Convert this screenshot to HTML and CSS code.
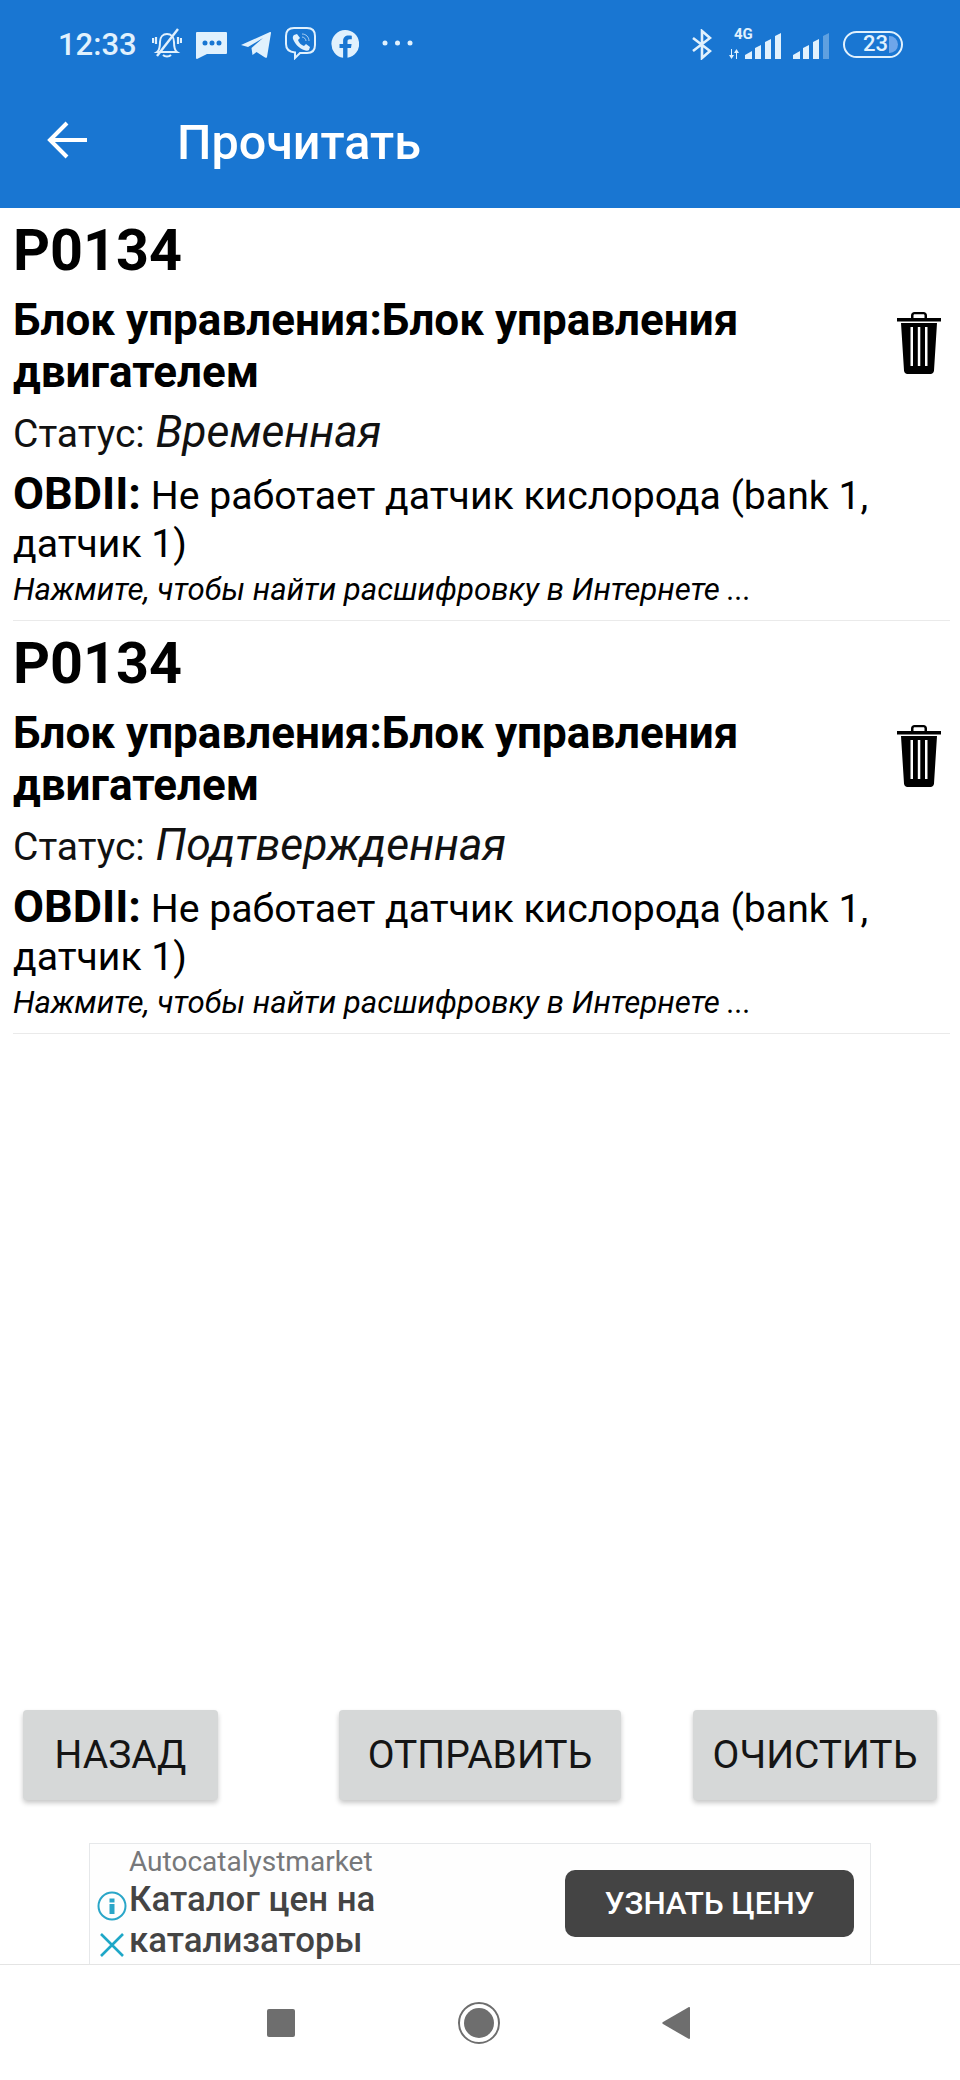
FILE: index.html
```html
<!DOCTYPE html>
<html lang="ru">
<head>
<meta charset="utf-8">
<title>Прочитать</title>
<link rel="stylesheet" href="styles.css">
</head>
<body>
<svg class="defs" width="0" height="0" aria-hidden="true">
  <symbol id="trash" viewBox="0 0 44 62">
    <path d="M14 6V3.500C14 1.500 15.500 0 17.500 0h9C28.500 0 30 1.500 30 3.500V6h-2.500V3.500C27.500 2.800 27 2.300 26.300 2.300h-8.600C17 2.300 16.500 2.800 16.500 3.500V6z"/>
    <path d="M0 6h44v3.500H0z"/>
    <path fill-rule="evenodd" d="M4 11h36l-3 47.500C36.800 60.800 35.500 62 33.500 62h-23C8.500 62 7.200 60.800 7 58.500zM13.500 15v39h2.500V15zM20.800 15v39h2.500V15zM28 15v39h2.500V15z"/>
  </symbol>
  <symbol id="bars" viewBox="0 0 36 26">
    <path d="M0 26v-4l7-4v8zM10 26V15l6-3v14zM20 26V9l6-3v20zM30 26V3l6-3v26z"/>
  </symbol>
</svg>
<header class="appbar">
  <div class="status">
    <span class="time">12:33</span>
    <div class="notif">
      <svg class="ic ic-bell" viewBox="0 0 30 30"><g fill="none" stroke="currentColor" stroke-width="2"><path d="M5 24c3-2 3-6 3-10 0-5 3-8 7-8s7 3 7 8c0 4 0 8 3 10z"/><path d="M11 27c2 2 6 2 8 0"/><path d="M5 28L26 1" stroke-width="2.400"/><path d="M4 9v7M1 10v5M26 9v7M29 10v5" stroke-width="2.200"/></g></svg>
      <svg class="ic ic-msg" viewBox="0 0 31 27"><path fill="currentColor" fill-rule="evenodd" d="M1 0h29a1 1 0 0 1 1 1v20a1 1 0 0 1-1 1H11l-10 5a1 1 0 0 1-1-1V1a1 1 0 0 1 1-1zM9 8.500a2.500 2.500 0 1 0 0 5 2.500 2.500 0 0 0 0-5zM16 8.500a2.500 2.500 0 1 0 0 5 2.500 2.500 0 0 0 0-5zM23 8.500a2.500 2.500 0 1 0 0 5 2.500 2.500 0 0 0 0-5z"/></svg>
      <svg class="ic ic-tg" viewBox="0 0 30 26"><path fill="currentColor" d="M0 13L29 0c1 0 1 .5 1 1l-4 24c-.2 1-1 1-2 .5L15.500 20l-4 3-1-7L22 6 7 15z"/></svg>
      <svg class="ic ic-viber" viewBox="0 0 31 33"><path fill="none" stroke="currentColor" stroke-width="2" d="M9 1h13c5 0 8 3 8 8v9c0 5-3 8-8 8h-7l-5 5v-5.500C4 25 1 22 1 17V9c0-5 3-8 8-8z"/><path fill="currentColor" d="M9 8l3-1 3 4-2 2c1 3 3 5 6 6l2-2 4 3-1 3c-1 1-3 1-5 0-5-2-9-6-11-11-.5-2 0-3 1-4z"/><path fill="none" stroke="currentColor" stroke-width="1" opacity=".7" d="M17 7c4 0 7 3 7 7M17 10c2 0 4 2 4 4"/></svg>
      <svg class="ic ic-fb" viewBox="0 0 28 28"><path fill="currentColor" d="M14 0a14 14 0 0 1 2.500 27.800V18h3.500l.6-4h-4.100v-2.500c0-1.300.6-2.200 2.300-2.200h2V5.800c-1-.2-2.100-.3-3.200-.3-3.400 0-5.500 2-5.500 5.600V14H8.500v4h3.600v9.800A14 14 0 0 1 14 0z"/></svg>
      <svg class="ic ic-dots" viewBox="0 0 31 6"><circle cx="3" cy="3" r="2.500" fill="currentColor"/><circle cx="15.500" cy="3" r="2.500" fill="currentColor"/><circle cx="28" cy="3" r="2.500" fill="currentColor"/></svg>
    </div>
    <div class="sys">
      <svg class="ic ic-bt" viewBox="0 0 20 31"><path fill="none" stroke="currentColor" stroke-width="2.600" d="M1 9l17 13-8 7V2l8 7L1 22"/></svg>
      <div class="net">
        <span class="net-label">4G</span>
        <svg class="ic ic-arrows" viewBox="0 0 10 10"><path fill="currentColor" d="M3 0v6h2L2.500 10 0 6h2V0zM7 10V4H5l2.500-4L10 4H8v6z"/></svg>
        <svg class="ic ic-bars"><use href="#bars"/></svg>
      </div>
      <svg class="ic ic-bars2" viewBox="0 0 36 26"><path fill="currentColor" d="M0 26v-4l7-4v8zM10 26V15l6-3v14zM20 26V9l6-3v20z"/><path fill="currentColor" opacity=".35" d="M30 26V3l6-3v26z"/></svg>
      <div class="battery"><span class="batt-num">23</span><span class="batt-fill"></span></div>
    </div>
  </div>
  <div class="toolbar">
    <svg class="back" viewBox="0 0 40 38"><path fill="none" stroke="currentColor" stroke-width="4" d="M40 19H3M20 2L3 19l17 17"/></svg>
    <h1 class="title">Прочитать</h1>
  </div>
</header>
<main class="list">
  <article class="item">
    <div class="code">P0134</div>
    <div class="unit-row">
      <div class="unit">Блок управления:Блок управления двигателем</div>
      <svg class="trash"><use href="#trash"/></svg>
    </div>
    <div class="state">Статус: <em class="state-val">Временная</em></div>
    <div class="desc"><b class="desc-key">OBDII:</b> Не работает датчик кислорода (bank 1, датчик 1)</div>
    <div class="hint">Нажмите, чтобы найти расшифровку в Интернете ...</div>
  </article>
  <article class="item">
    <div class="code">P0134</div>
    <div class="unit-row">
      <div class="unit">Блок управления:Блок управления двигателем</div>
      <svg class="trash"><use href="#trash"/></svg>
    </div>
    <div class="state">Статус: <em class="state-val">Подтвержденная</em></div>
    <div class="desc"><b class="desc-key">OBDII:</b> Не работает датчик кислорода (bank 1, датчик 1)</div>
    <div class="hint">Нажмите, чтобы найти расшифровку в Интернете ...</div>
  </article>
</main>
<div class="actions">
  <button class="btn btn-back">НАЗАД</button>
  <button class="btn btn-send">ОТПРАВИТЬ</button>
  <button class="btn btn-clear">ОЧИСТИТЬ</button>
</div>
<aside class="ad">
  <div class="ad-icons">
    <svg class="ad-info" viewBox="0 0 30 30"><circle cx="15" cy="15" r="13.500" fill="none" stroke="currentColor" stroke-width="2"/><path fill="currentColor" d="M12.500 7.500h5v4h-5zM12.500 13h5v10h-5z"/></svg>
    <svg class="ad-close" viewBox="0 0 24 24"><path fill="none" stroke="currentColor" stroke-width="2.600" d="M1 1l22 22M23 1L1 23"/></svg>
  </div>
  <div class="ad-text">
    <div class="ad-brand">Autocatalystmarket</div>
    <div class="ad-title">Каталог цен на катализаторы</div>
  </div>
  <div class="ad-cta">УЗНАТЬ ЦЕНУ</div>
</aside>
<nav class="navbar">
  <span class="nav-square"></span>
  <span class="nav-home"><span class="nav-home-dot"></span></span>
  <svg class="nav-back" viewBox="0 0 28 32"><path fill="currentColor" d="M28 1v30c0 1-1 1-1.500.8L1 17c-1-.6-1-1.400 0-2L26.500.2C27 0 28 0 28 1z"/></svg>
</nav>
</body>
</html>
```

FILE: styles.css
```css
* { box-sizing: border-box; }
html, body { margin: 0; padding: 0; }
body {
  width: 960px;
  height: 2080px;
  display: flex;
  flex-direction: column;
  background: #fff;
  color: #000;
  font-family: Roboto, "Noto Sans", sans-serif;
  overflow: hidden;
}
.defs { position: absolute; }

/* App bar */
.appbar { height: 208px; background: #1976d2; color: #fff; flex: none; }
.status {
  height: 88px;
  padding: 0 57px 0 58px;
  display: flex;
  align-items: center;
  color: #e1f1fd;
}
.time { font-size: 31px; font-weight: 500; width: 94px; }
.ic { display: block; flex: none; }
.notif { display: flex; align-items: center; }
.ic-bell { width: 30px; height: 30px; margin-top: -2px; }
.ic-msg { width: 31px; height: 27px; margin-left: 14px; margin-top: 3px; }
.ic-tg { width: 30px; height: 26px; margin-left: 14px; margin-top: 2px; }
.ic-viber { width: 31px; height: 33px; margin-left: 14px; margin-top: -1px; }
.ic-fb { width: 28px; height: 28px; margin-left: 15px; margin-top: -1px; }
.ic-dots { width: 31px; height: 6px; margin-left: 23px; margin-top: -2px; }
.sys { margin-left: auto; display: flex; align-items: center; }
.ic-bt { width: 20px; height: 31px; }
.net {
  width: 52px;
  height: 30px;
  margin-left: 17px;
  display: grid;
  grid-template-columns: 16px 36px;
  align-items: end;
  position: relative;
}
.net-label {
  position: absolute;
  left: 5px;
  top: -2px;
  font-size: 15px;
  line-height: 14px;
  font-weight: 700;
}
.ic-arrows { width: 10px; height: 10px; }
.ic-bars { width: 36px; height: 26px; fill: currentColor; }
.ic-bars2 { width: 36px; height: 26px; margin-left: 12px; margin-top: 4px; }
.battery {
  width: 60px;
  height: 27px;
  margin-left: 14px;
  border: 2.500px solid currentColor;
  border-radius: 14px;
  display: flex;
  align-items: center;
  justify-content: flex-end;
  padding-right: 3px;
  gap: 1px;
}
.batt-num { font-size: 22px; font-weight: 500; line-height: 22px; }
.batt-fill { width: 9px; height: 17px; background: #6ea6ea; border-radius: 0 9px 9px 0; }
.toolbar {
  height: 120px;
  padding-left: 47px;
  display: flex;
  align-items: center;
}
.back { width: 40px; height: 38px; flex: none; margin-top: -16px; }
.title {
  margin: -10px 0 0 90px;
  font-size: 48.500px;
  font-weight: 500;
  line-height: 56px;
}

/* List */
.list { flex: 1; padding: 0 10px 0 13px; }
.item { height: 413px; padding-top: 10px; border-bottom: 1px solid #eaeaea; }
.code { font-size: 57.500px; font-weight: 700; line-height: 66px; }
.unit-row { margin-top: 10px; display: flex; justify-content: space-between; align-items: flex-start; }
.unit { font-size: 44px; font-weight: 700; line-height: 52px; width: 800px; }
.trash { width: 44px; height: 62px; flex: none; margin: 18px 9px 0 0; fill: #000; }
.state { font-size: 39px; line-height: 56px; margin-top: 6px; font-weight: 400; color: #111; }
.state-val { font-size: 44.500px; font-weight: 400; font-style: italic; margin-left: 1px; }
.desc { font-size: 39.200px; line-height: 48px; margin-top: 8px; font-weight: 400; }
.desc-key { font-size: 45px; font-weight: 700; }
.hint { font-size: 31.200px; line-height: 36px; margin-top: 4px; font-style: italic; font-weight: 400; }

/* Buttons */
.actions {
  flex: none;
  padding: 0 23px;
  display: grid;
  grid-template-columns: 1fr 1fr 1fr;
  margin-bottom: 43px;
}
.btn {
  height: 90px;
  border: 0;
  border-radius: 4px;
  background: #d6d8d8;
  color: #151515;
  font-family: inherit;
  font-size: 39px;
  font-weight: 400;
  box-shadow: 0 3px 5px rgba(0, 0, 0, .22);
  padding: 0;
}
.btn-back { width: 195px; justify-self: start; }
.btn-send { width: 282px; justify-self: center; }
.btn-clear { width: 244px; justify-self: end; }

/* Ad */
.ad {
  flex: none;
  width: 782px;
  height: 121px;
  margin-left: 89px;
  border: 1px solid #e6e8ea;
  border-bottom: 0;
  display: flex;
  align-items: flex-start;
  background: #fefefe;
}
.ad-icons { width: 39px; flex: none; display: flex; flex-direction: column; align-items: center; padding: 47px 0 0 4px; }
.ad-info { width: 30px; height: 30px; color: #2aa6c8; }
.ad-close { width: 24px; height: 24px; margin-top: 12px; color: #1ea7c7; }
.ad-text { width: 436px; }
.ad-brand { font-size: 28px; line-height: 34px; margin-top: 1px; color: #77787a; }
.ad-title { font-size: 34.800px; font-weight: 500; line-height: 41px; color: #444; }
.ad-cta {
  width: 289px;
  height: 67px;
  margin-top: 26px;
  background: #444;
  border-radius: 10px;
  color: #fff;
  font-size: 31.300px;
  font-weight: 500;
  display: flex;
  align-items: center;
  justify-content: center;
}

/* Nav bar */
.navbar {
  flex: none;
  height: 116px;
  border-top: 1px solid #e4e4e4;
  display: flex;
  align-items: center;
  padding-left: 267px;
  color: #6e6e6e;
}
.nav-square { width: 28px; height: 28px; background: currentColor; border-radius: 2px; }
.nav-home {
  width: 42px;
  height: 42px;
  margin-left: 163px;
  border: 2.500px solid currentColor;
  border-radius: 50%;
  display: flex;
  align-items: center;
  justify-content: center;
}
.nav-home-dot { width: 30px; height: 30px; border-radius: 50%; background: currentColor; }
.nav-back { width: 28px; height: 32px; margin-left: 162px; flex: none; }
```
